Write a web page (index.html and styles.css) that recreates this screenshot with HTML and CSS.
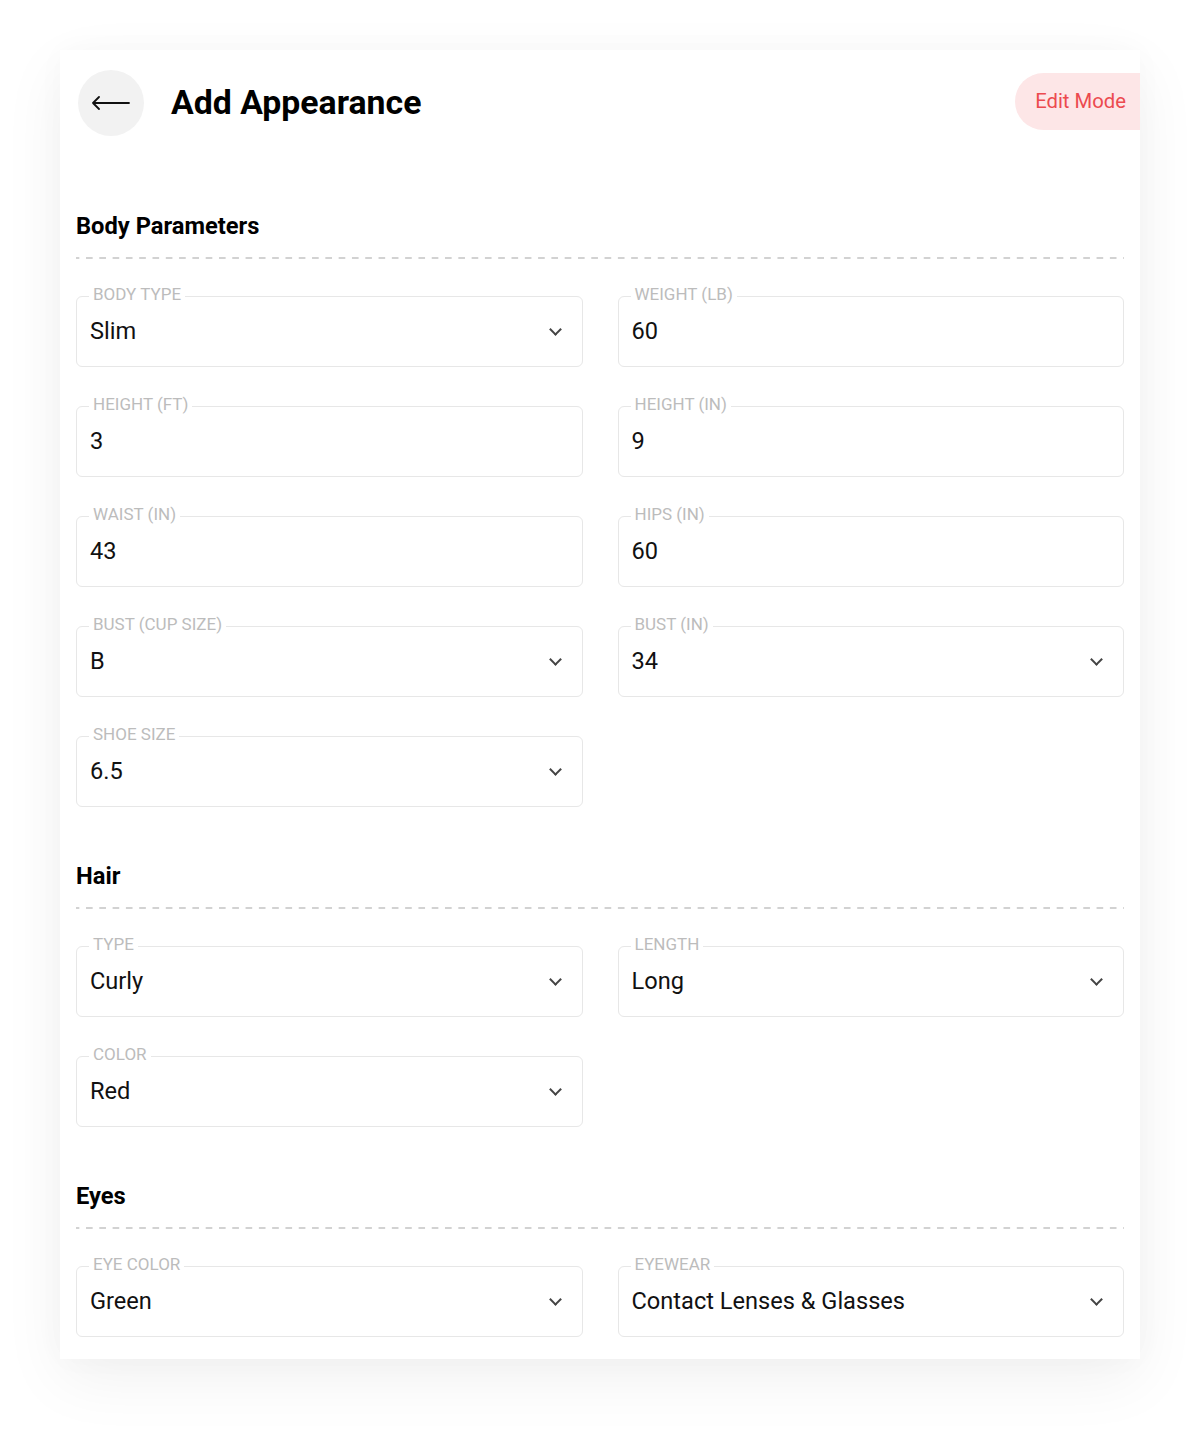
FILE: index.html
```html
<!DOCTYPE html>
<html lang="en">
<head>
<meta charset="utf-8">
<title>Add Appearance</title>
<link rel="stylesheet" href="styles.css">
</head>
<body>
<div class="card">
  <header class="header">
    <button class="back" aria-label="Back">
      <svg width="38" height="14" viewBox="0 0 38 14"><path d="M1 7H37M1 7L7 1M1 7L7 13" fill="none" stroke="#111" stroke-width="1.8" stroke-linecap="round" stroke-linejoin="round"/></svg>
    </button>
    <h1 class="title">Add Appearance</h1>
    <button class="edit">Edit Mode</button>
  </header>

  <section class="section section-first">
    <h2 class="section-title">Body Parameters</h2>
    <div class="divider"></div>
    <div class="grid">
      <div class="field"><span class="label">Body Type</span><span class="value">Slim</span><span class="chev"></span></div>
      <div class="field"><span class="label">Weight (LB)</span><span class="value">60</span></div>
      <div class="field"><span class="label">Height (FT)</span><span class="value">3</span></div>
      <div class="field"><span class="label">Height (IN)</span><span class="value">9</span></div>
      <div class="field"><span class="label">Waist (IN)</span><span class="value">43</span></div>
      <div class="field"><span class="label">Hips (IN)</span><span class="value">60</span></div>
      <div class="field"><span class="label">Bust (Cup Size)</span><span class="value">B</span><span class="chev"></span></div>
      <div class="field"><span class="label">Bust (IN)</span><span class="value">34</span><span class="chev"></span></div>
      <div class="field"><span class="label">Shoe Size</span><span class="value">6.5</span><span class="chev"></span></div>
    </div>
  </section>

  <section class="section">
    <h2 class="section-title">Hair</h2>
    <div class="divider"></div>
    <div class="grid">
      <div class="field"><span class="label">Type</span><span class="value">Curly</span><span class="chev"></span></div>
      <div class="field"><span class="label">Length</span><span class="value">Long</span><span class="chev"></span></div>
      <div class="field"><span class="label">Color</span><span class="value">Red</span><span class="chev"></span></div>
    </div>
  </section>

  <section class="section">
    <h2 class="section-title">Eyes</h2>
    <div class="divider"></div>
    <div class="grid">
      <div class="field"><span class="label">Eye Color</span><span class="value">Green</span><span class="chev"></span></div>
      <div class="field"><span class="label">Eyewear</span><span class="value">Contact Lenses &amp; Glasses</span><span class="chev"></span></div>
    </div>
  </section>
</div>
</body>
</html>
```

FILE: styles.css
```css
* { box-sizing: border-box; }
html, body { margin: 0; padding: 0; background: #fff; }
body {
  font-family: Roboto, "Liberation Sans", Arial, sans-serif;
  color: #111;
  padding: 50px 60px 80px;
}
.card {
  background: #fff;
  padding: 20px 16px 22px 16px;
  overflow: hidden;
  box-shadow: 0 20px 60px rgba(0, 0, 0, 0.06), 0 0 30px rgba(0, 0, 0, 0.025);
}
.header {
  display: flex;
  align-items: center;
  height: 66px;
}
.back {
  width: 66px;
  height: 66px;
  border-radius: 50%;
  border: 0;
  background: #f2f2f2;
  display: flex;
  align-items: center;
  justify-content: center;
  margin-left: 2px;
  padding: 0;
  cursor: pointer;
}
.title {
  margin: 0 0 0 27px;
  font-size: 33.8px;
  font-weight: 700;
  line-height: 40px;
  flex: 1;
  color: #000;
}
.edit {
  border: 0;
  background: #fde6e7;
  color: #ec4a4f;
  font-family: inherit;
  font-size: 20.3px;
  height: 57px;
  padding: 0 20px;
  border-radius: 29px 0 0 29px;
  margin-right: -22px;
  margin-top: -4px;
}
.section { margin-top: 55px; }
.section-first { margin-top: 76px; }
.section-title {
  margin: 0;
  font-size: 23.7px;
  font-weight: 700;
  line-height: 28px;
  color: #000;
}
.divider {
  height: 2px;
  margin-top: 17px;
  background-image: linear-gradient(to right, #d2d2d2 0 7px, transparent 7px 13.3px);
  background-size: 13.3px 2px;
  background-position: -3.3px 0;
}
.grid {
  display: grid;
  grid-template-columns: 1fr 1fr;
  column-gap: 35px;
  row-gap: 39px;
  margin-top: 37px;
}
.field {
  position: relative;
  height: 71px;
  border: 1px solid #e7e7e7;
  border-radius: 6px;
  display: flex;
  align-items: center;
  padding: 0 18px 0 13px;
}
.label {
  position: absolute;
  top: -13px;
  left: 12px;
  padding: 0 4px;
  background: #fff;
  font-size: 17px;
  line-height: 20px;
  text-transform: uppercase;
  color: #bcbcbc;
}
.value {
  flex: 1;
  font-size: 23.6px;
  line-height: 28px;
  margin-top: -1px;
  color: #111;
}
.chev {
  width: 9px;
  height: 9px;
  border-right: 2px solid #444;
  border-bottom: 2px solid #444;
  transform: rotate(45deg);
  margin-top: -5px;
  margin-right: 4px;
}
```
